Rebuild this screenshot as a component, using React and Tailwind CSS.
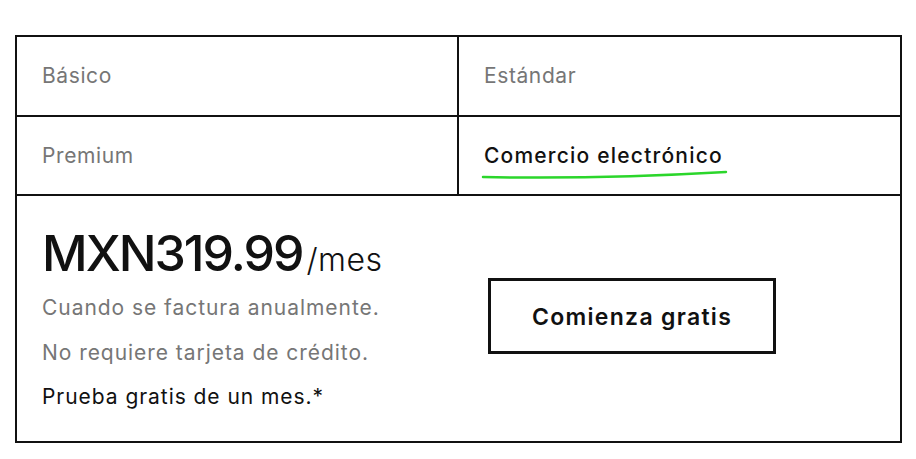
export default function App() {
    return (
        <div className="min-h-screen bg-white pt-[35px] pl-[15px]" style={{ fontFamily: 'Inter, "Noto Sans", sans-serif' }}>
            <div className="w-[887px] border-2 border-[#111]">
                <div className="grid grid-cols-[442px_1fr] border-b-2 border-[#111]">
                    <div className="h-[78px] flex items-center pl-[25px] border-r-2 border-[#111] text-[21px] tracking-[0.6px] text-[#767676]">Básico</div>
                    <div className="h-[78px] flex items-center pl-[25px] text-[21px] tracking-[0.6px] text-[#767676]">Estándar</div>
                </div>
                <div className="grid grid-cols-[442px_1fr] border-b-2 border-[#111]">
                    <div className="h-[77px] flex items-center pl-[25px] border-r-2 border-[#111] text-[21px] tracking-[0.6px] text-[#767676]">Premium</div>
                    <div className="h-[77px] flex items-center pl-[25px]">
                        <div className="relative text-[21px] tracking-[1.2px] font-medium text-[#111]">
                            Comercio electrónico
                            <svg className="absolute left-[-3px] top-[29px]" width="250" height="12" viewBox="0 0 250 12">
                                <path d="M2 8 C 50 9, 140 9, 245 3" stroke="#2bd62b" strokeWidth="2.5" fill="none" strokeLinecap="round" />
                            </svg>
                        </div>
                    </div>
                </div>
                <div className="grid grid-cols-[442px_1fr] h-[245px]">
                    <div className="pl-[25px] pt-[32px]">
                        <div className="flex items-baseline text-[#111]">
                            <span className="text-[50px] font-medium leading-none tracking-[-2px]">MXN319.99</span>
                            <span className="text-[32px] font-light ml-[4px] tracking-[0.5px]">/mes</span>
                        </div>
                        <p className="mt-[2px] text-[21px] tracking-[0.95px] text-[#767676] leading-[44px]">Cuando se factura anualmente.</p>
                        <p className="text-[21px] tracking-[0.95px] text-[#767676] leading-[45px]">No requiere tarjeta de crédito.</p>
                        <p className="text-[21px] tracking-[0.95px] text-[#111] leading-[44px]">Prueba gratis de un mes.*</p>
                    </div>
                    <div className="pl-[29px] pt-[82px]">
                        <button className="w-[288px] h-[76px] pt-[3px] border-[3px] border-[#111] text-[23px] tracking-[1.3px] font-semibold text-[#111]">
                            Comienza gratis
                        </button>
                    </div>
                </div>
            </div>
        </div>
    )
}
